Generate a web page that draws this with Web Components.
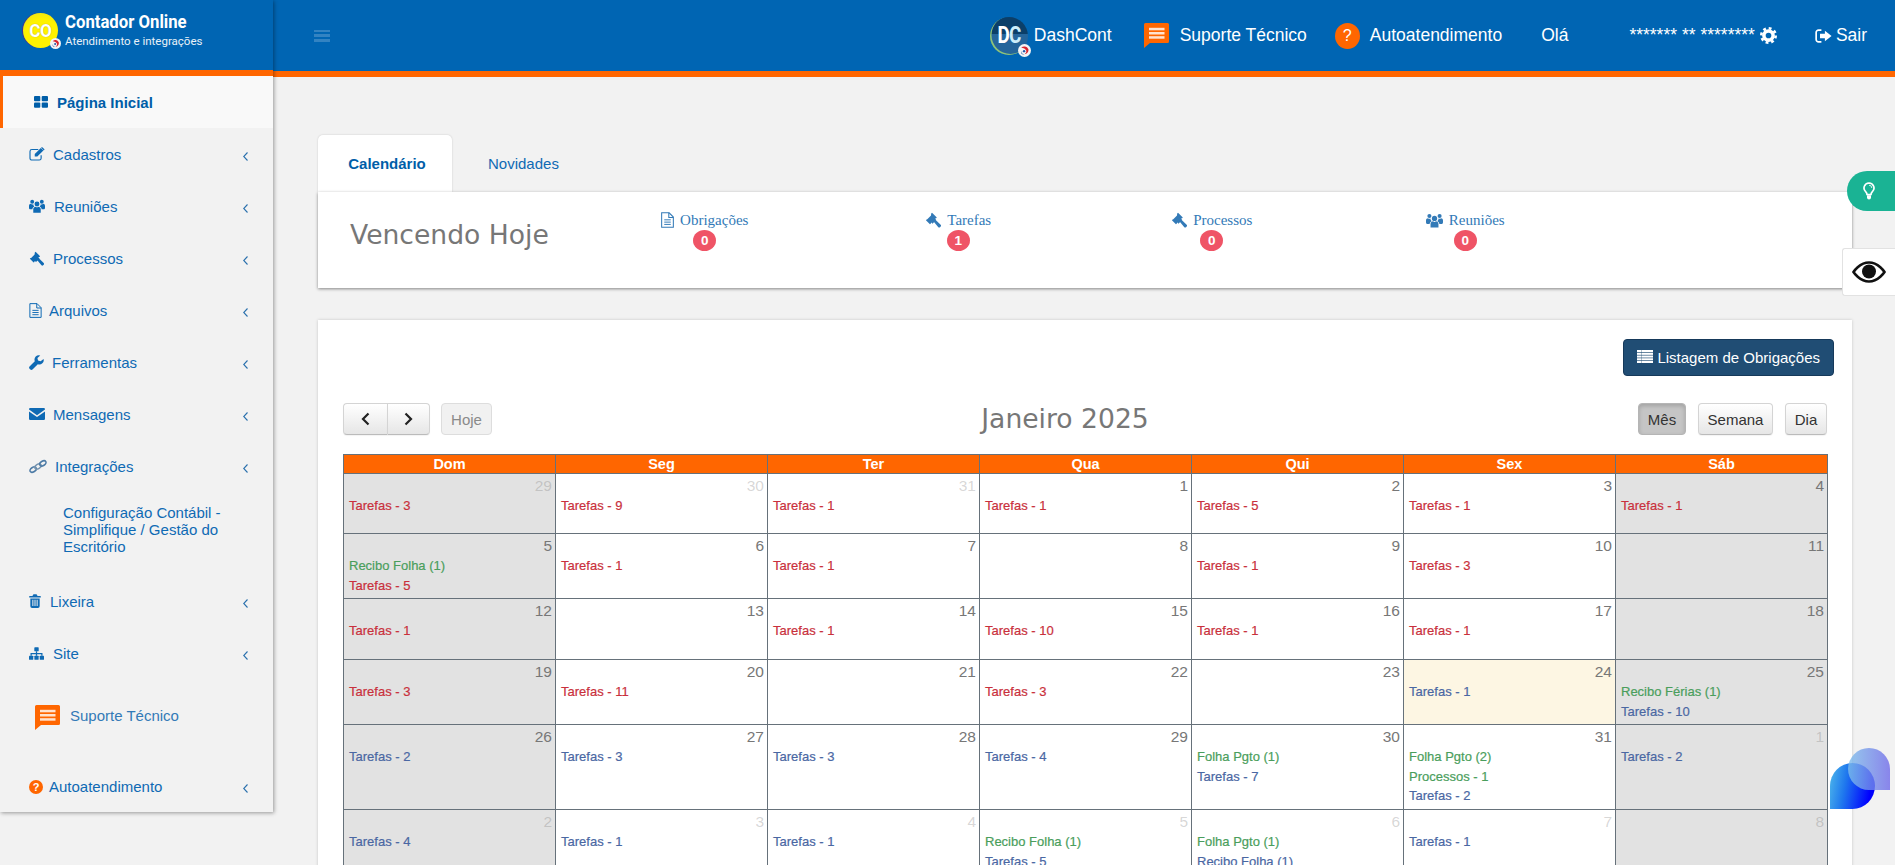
<!DOCTYPE html>
<html lang="pt-BR">
<head>
<meta charset="utf-8">
<title>Contador Online</title>
<style>
html,body{margin:0;padding:0;height:865px;overflow:hidden;background:#f2f2f2;font-family:"Liberation Sans",Arial,sans-serif;}
</style>
</head>
<body>
<cr-app>
  <cr-sidebar slot="sidebar"></cr-sidebar>
  <cr-topbar slot="top"></cr-topbar>
  <cr-tabs>
    <cr-due-card></cr-due-card>
  </cr-tabs>
  <cr-calendar></cr-calendar>
</cr-app>
<cr-floats></cr-floats>
<script>
const ICONS = {
  grid:'<svg viewBox="0 0 14 12"><rect x="0" y="0" width="6.3" height="5.2" rx="1"/><rect x="7.7" y="0" width="6.3" height="5.2" rx="1"/><rect x="0" y="6.6" width="6.3" height="5.2" rx="1"/><rect x="7.7" y="6.6" width="6.3" height="5.2" rx="1"/></svg>',
  edit:'<svg viewBox="0 0 24 22"><path d="M18.5 13v4.5a3 3 0 0 1-3 3H4a3 3 0 0 1-3-3V7a3 3 0 0 1 3-3h10" fill="none" stroke="currentColor" stroke-width="1.8"/><path d="M8.5 11 18 1.5l4 4L12.5 15h-4z"/><path d="M19 .6a1.2 1.2 0 0 1 1.7 0l2.6 2.6a1.2 1.2 0 0 1 0 1.7l-.6.6-4.3-4.3z"/></svg>',
  users:'<svg viewBox="0 0 24 20"><circle cx="12" cy="7" r="3.7"/><path d="M6.4 20v-5c0-2.6 1.8-4 3.6-4 .6.6 1.2 1 2 1s1.4-.4 2-1c1.8 0 3.6 1.400 3.600 4v5z"/><circle cx="4.800" cy="3.700" r="2.900"/><circle cx="19.200" cy="3.700" r="2.900"/><path d="M0 12.500V10c0-2 1.300-3.200 2.800-3.200.6.5 1.300.8 2 .8.500 0 1-.1 1.500-.4 0 1.400.6 2.800 1.700 3.700-1.500.6-2.800 2.100-2.900 4.100H2c-1.100 0-2-.9-2-2.500z"/><path d="M24 12.500V10c0-2-1.300-3.200-2.800-3.200-.6.5-1.300.8-2 .8-.5 0-1-.1-1.500-.4 0 1.400-.6 2.800-1.700 3.700 1.500.6 2.800 2.100 2.900 4.100H22c1.100 0 2-.9 2-2.500z"/></svg>',
  gavel:'<svg viewBox="0 0 24 24"><path d="M9.800 1.200 11 .2l1.200 1 6 6-1 1.200-1 .3-.6.600 1.700 1.700-5.600 5.600-1.700-1.700-.6.600-.3 1-1.200 1-6-6 1-1.200 1-.3 5.600-5.600z" transform="translate(-.5 1)"/><path d="M12.500 14 15.300 11.200 23.500 19.300a1.800 1.800 0 0 1 0 2.500l-1 1a1.800 1.800 0 0 1-2.500 0z"/></svg>',
  file:'<svg viewBox="0 0 20 24"><path d="M1 1h11.500L19 7.500V23H1z" fill="none" stroke="currentColor" stroke-width="1.600"/><path d="M12 1v7h7" fill="none" stroke="currentColor" stroke-width="1.600"/><rect x="5" y="11" width="10" height="1.500"/><rect x="5" y="14.500" width="10" height="1.500"/><rect x="5" y="18" width="10" height="1.500"/></svg>',
  wrench:'<svg viewBox="0 0 24 24"><path d="M23.300 6.200a7 7 0 0 1-9.200 8.500L6 22.800a3 3 0 0 1-4.300 0l-.5-.5a3 3 0 0 1 0-4.300l8.100-8.100A7 7 0 0 1 18 .7l-4.500 4 .9 4.200 4.200 1z"/></svg>',
  mail:'<svg viewBox="0 0 24 18"><path d="M0 1.800A1.800 1.800 0 0 1 1.800 0h20.400A1.800 1.800 0 0 1 24 1.800v.6L12 10.800 0 2.400z"/><path d="M0 5.200 12 13.600 24 5.200v11a1.800 1.800 0 0 1-1.800 1.800H1.800A1.800 1.800 0 0 1 0 16.200z"/></svg>',
  chain:'<svg viewBox="0 0 26 20" fill="none" stroke="#4d7ba6" stroke-width="2.200"><ellipse cx="6" cy="14.500" rx="5" ry="3.200" transform="rotate(-32 6 14.500)"/><ellipse cx="13" cy="10" rx="5" ry="3.200" transform="rotate(-32 13 10)" stroke="#7895b0"/><ellipse cx="20" cy="5.500" rx="5" ry="3.200" transform="rotate(-32 20 5.500)"/></svg>',
  trash:'<svg viewBox="0 0 20 24"><path fill-rule="evenodd" d="M6.500 1.500A1.500 1.500 0 0 1 8 .5h4a1.500 1.500 0 0 1 1.500 1l.8 2H19a1 1 0 0 1 1 1V6H0V4.500a1 1 0 0 1 1-1h4.700zM2 7.500h16V21a3 3 0 0 1-3 3H5a3 3 0 0 1-3-3zM5.500 10v10.500h1.700V10zm3.650 0v10.500h1.700V10zm3.650 0v10.500h1.700V10z"/></svg>',
  sitemap:'<svg viewBox="0 0 24 20"><rect x="8.500" y="0" width="7" height="6.500" rx="1"/><rect x="0" y="13.500" width="6.800" height="6.500" rx="1"/><rect x="8.600" y="13.500" width="6.800" height="6.500" rx="1"/><rect x="17.200" y="13.500" width="6.800" height="6.500" rx="1"/><path d="M11 6.500h2V9h8.600v4.500h-2V11H13v2.500h-2V11H4.400v2.500h-2V9H11z"/></svg>',
  chat:'<svg viewBox="0 0 25 25"><path fill="#ff6600" d="M1.500 0h22A1.500 1.500 0 0 1 25 1.500v17a1.500 1.500 0 0 1-1.500 1.500H6L0 25V1.500A1.500 1.500 0 0 1 1.500 0z"/><rect x="5" y="4.800" width="15.500" height="2.500" fill="#ffe3cf"/><rect x="5" y="9" width="15.500" height="2.500" fill="#ffe3cf"/><rect x="5" y="13.200" width="15.500" height="2.500" fill="#ffe3cf"/></svg>',
  gear:'<svg viewBox="0 0 24 24" fill="none" stroke="currentColor"><circle cx="12" cy="12" r="6.500" stroke-width="5"/><circle cx="12" cy="12" r="10.200" stroke-width="3.600" stroke-dasharray="4 4.010"/></svg>',
  signout:'<svg viewBox="0 0 24 20"><path d="M9 1.500H5A3.500 3.500 0 0 0 1.500 5v10A3.500 3.500 0 0 0 5 18.500h4" fill="none" stroke="currentColor" stroke-width="2.400"/><path d="M14 2.500 23.500 10 14 17.500v-4.300H7V6.800h7z"/></svg>',
  list:'<svg viewBox="0 0 16 13"><rect width="16" height="2.100" y="0"/><rect width="16" height="2.100" y="2.750"/><rect width="16" height="2.100" y="5.500"/><rect width="16" height="2.100" y="8.250"/><rect width="16" height="2.100" y="11"/><rect x="4" y="0" width=".7" height="13" fill="#204d74" opacity=".5"/></svg>',
  bulb:'<svg viewBox="0 0 12 18"><path d="M6 1a5 5 0 0 0-3.200 8.800C3.700 10.600 4 11.500 4 12.500h4c0-1 .3-1.900 1.200-2.700A5 5 0 0 0 6 1z" fill="none" stroke="currentColor" stroke-width="1.700"/><path d="M4 13.200h4v2.300a2 2 0 0 1-4 0z"/><path d="M6 3.200a2.800 2.800 0 0 1 2.800 2.800" fill="none" stroke="currentColor" stroke-width=".8"/></svg>',
  eye:'<svg viewBox="0 0 34 24"><path d="M1.500 12S7.500 2.500 17 2.500 32.500 12 32.500 12 26.500 21.500 17 21.500 1.500 12 1.500 12z" fill="none" stroke="currentColor" stroke-width="2.600"/><circle cx="17" cy="11.500" r="7"/></svg>',
  swirl:'<svg viewBox="0 0 12 12"><circle cx="6" cy="6" r="6" fill="#f4f4f4"/><path d="M3 3.500a4 4 0 0 1 6.500 1c.7 2.300-.8 4.800-3.500 5 1.400-1 2-2.200 1.600-3.500C7 4.600 5 3.500 3 3.500z" fill="#d9232e"/><path d="M3 6.500a3 3 0 0 0 3 3c-2.200.6-3.800-.8-3-3z" fill="#2456a6"/><circle cx="5.600" cy="6.600" r="1.100" fill="#2456a6"/></svg>'
};
function define(name, css, html, setup){
  customElements.define(name, class extends HTMLElement{
    connectedCallback(){
      if(this.shadowRoot) return;
      const r=this.attachShadow({mode:'open'});
      r.innerHTML='<style>'+css+'</style>'+(typeof html==='function'?html(this):html);
      if(setup) setup(this,r);
    }
  });
}
define('cr-icon',':host{display:inline-flex;flex:none;fill:currentColor}svg{display:block;width:100%;height:100%}',
  h=>ICONS[h.getAttribute('name')]||'',
  h=>{const w=h.getAttribute('w'),t=h.getAttribute('h');if(w)h.style.width=w+'px';if(t)h.style.height=t+'px';});

define('cr-app',`:host{display:flex;align-items:flex-start;width:1895px;height:865px;overflow:hidden;background:#f2f2f2}
.side{flex:none;width:273px;position:relative;z-index:2}
.col{flex:1;min-width:0}
.content{display:flex;flex-direction:column;padding:58px 43px 0 45px;gap:32px}`,
`<div class="side"><slot name="sidebar"></slot></div><div class="col"><slot name="top"></slot><div class="content"><slot></slot></div></div>`);

define('cr-brand',`:host{display:flex;align-items:flex-start;height:70px;box-sizing:border-box;background:#0065b3;border-bottom:0;color:#fff;padding:13px 0 0 23px;position:relative}
.logo{position:relative;width:35px;height:35px;border-radius:50%;background:radial-gradient(circle at 55% 65%,#fff200 0 55%,#e6de1c 100%);box-shadow:-1px 0 0 #4b2f8f;display:flex;align-items:center;justify-content:center}
.co{font:700 19px Roboto,sans-serif;color:#fff;letter-spacing:-.5px;transform:scaleX(.9);text-shadow:0 0 1px #a89c10}
cr-icon{position:absolute;right:-3px;bottom:-1px}
.t{margin-left:7px;display:flex;flex-direction:column;white-space:nowrap}
.a{font:700 19px/20px Roboto,sans-serif;transform:scaleX(.88);transform-origin:left;margin-top:-1px}
.b{font:400 11.500px/14px Roboto,sans-serif;margin-top:2px;color:#e8f1f8}`,
`<div class="logo"><span class="co">CO</span><cr-icon name="swirl" w="11" h="11"></cr-icon></div><div class="t"><span class="a">Contador Online</span><span class="b">Atendimento e integrações</span></div>`);

define('cr-nav-item',`:host{display:flex;align-items:center;height:52px;box-sizing:border-box;padding:0 25px 0 29px;color:#0f6ab4;font:15px "Liberation Sans",sans-serif}
:host([active]){background:#f9f9f9;border-left:3px solid #ff6600;padding-left:31px;color:#005ea8;font-weight:700}
.l{flex:1;white-space:nowrap}
.c{width:5px;height:9px;margin-top:4px;flex:none}`,
h=>{const n=h.getAttribute('icon'),w=h.getAttribute('w')||15,t=h.getAttribute('ih')||14,g=h.getAttribute('gap')||8;
  const ic=n==='q'?`<cr-q style="margin-right:${g}px"></cr-q>`:`<cr-icon name="${n}" w="${w}" h="${t}" style="margin-right:${g}px"></cr-icon>`;
  const ch=h.hasAttribute('nochev')?'':'<svg class="c" viewBox="0 0 5 9" fill="none" stroke="#2a70ad" stroke-width="1.100"><path d="M4.500 .5.700 4.500l3.800 4"/></svg>';
  return ic+`<span class="l"><slot></slot></span>`+ch;});
define('cr-q',`:host{display:inline-flex;flex:none;width:14px;height:14px;border-radius:50%;background:#ff6600;color:#fff;align-items:center;justify-content:center;font:700 11px/14px "Liberation Sans",sans-serif}`,'?');

define('cr-sidebar',`:host{display:block;width:273px;box-shadow:1px 1px 4px rgba(0,0,0,.38);background:#f2f2f2}
.bar{height:6px;background:#ff6600}
.sub{padding:11.500px 30px 20.500px 63px;font:15px/17px "Liberation Sans",sans-serif;color:#0f6ab4}
.sup{display:flex;align-items:center;height:72px;margin-bottom:10px;padding-left:35px;color:#337ab7;font:15px "Liberation Sans",sans-serif}
.sup cr-icon{margin:5px 10px 0 0}`,
`<cr-brand></cr-brand><div class="bar"></div>
<cr-nav-item icon="grid" w="14" ih="12" gap="9" nochev active>Página Inicial</cr-nav-item>
<cr-nav-item icon="edit" w="16" ih="14" gap="8">Cadastros</cr-nav-item>
<cr-nav-item icon="users" w="16" ih="14" gap="9">Reuniões</cr-nav-item>
<cr-nav-item icon="gavel" w="15" ih="15" gap="9">Processos</cr-nav-item>
<cr-nav-item icon="file" w="13" ih="15" gap="7">Arquivos</cr-nav-item>
<cr-nav-item icon="wrench" w="15" ih="15" gap="8">Ferramentas</cr-nav-item>
<cr-nav-item icon="mail" w="16" ih="12" gap="8">Mensagens</cr-nav-item>
<cr-nav-item icon="chain" w="18" ih="15" gap="8">Integrações</cr-nav-item>
<div class="sub">Configuração Contábil - Simplifique / Gestão do Escritório</div>
<cr-nav-item icon="trash" w="12" ih="14" gap="9">Lixeira</cr-nav-item>
<cr-nav-item icon="sitemap" w="15" ih="13" gap="9">Site</cr-nav-item>
<div class="sup"><cr-icon name="chat" w="25" h="25"></cr-icon><span>Suporte Técnico</span></div>
<cr-nav-item icon="q" gap="6" style="height:51px">Autoatendimento</cr-nav-item>`);

define('cr-topbar',`:host{display:flex;align-items:center;height:71px;box-sizing:content-box;background:#0065b3;border-bottom:6px solid #ff6600;color:#fff;font:17.500px "Liberation Sans",sans-serif;white-space:nowrap;padding:0 28px 0 0}
.row{display:flex;align-items:center;width:100%;height:64px}
.ham{margin:0 auto 0 41px;width:16px;height:12px;display:flex;flex-direction:column;justify-content:space-between}
.ham i{display:block;height:2.500px;background:rgba(255,255,255,.2)}
.dc{position:relative;width:38px;height:38px;border-radius:50%;background:linear-gradient(#0b3f69 0 45%,#25659b 45%);box-shadow:inset 1.500px -1px 0 #8cc37a;display:flex;align-items:center;justify-content:center;margin-right:6px}
.dc b{font:700 23px Roboto,sans-serif;transform:scaleX(.82);letter-spacing:-1px;color:#fff}
.dc b i{font-style:normal;color:#cdeefa}
.dc cr-icon{position:absolute;right:-3px;bottom:-2px}
.q{width:25px;height:26px;border-radius:50%;background:#ff6600;display:flex;align-items:center;justify-content:center;font-size:16px;margin:0 10px 0 28px}
.stars{margin-left:61px}.ola{margin-left:39px}
.gear{margin-left:5px;margin-top:0}
.out{margin:0 4px 0 38px}`,
`<div class="row"><div class="ham"><i></i><i></i><i></i></div>
<div class="dc"><b>D<i>C</i></b><cr-icon name="swirl" w="13" h="13"></cr-icon></div><span>DashCont</span>
<cr-icon name="chat" w="25" h="25" style="margin:0 11px 0 32px"></cr-icon><span>Suporte Técnico</span>
<div class="q">?</div><span>Autoatendimento</span>
<span class="ola">Olá</span><span class="stars">******* ** ********</span>
<cr-icon class="gear" name="gear" w="17" h="17"></cr-icon>
<cr-icon class="out" name="signout" w="17" h="14"></cr-icon><span>Sair</span></div>`);

define('cr-tabs',`:host{display:block;font:15px "Liberation Sans",sans-serif}
.tabs{display:flex;height:57px}
.t{display:flex;align-items:center;justify-content:center;box-sizing:border-box}
.a{width:134px;background:#fff;border-radius:5px 5px 0 0;font-weight:700;color:#005ea8;box-shadow:0 0 2px rgba(0,0,0,.18);padding-left:4px}
.b{padding-left:36px;color:#0f6ab4}`,
`<div class="tabs"><div class="t a">Calendário</div><div class="t b">Novidades</div></div><slot></slot>`);

define('cr-stat',`:host{display:block;text-align:center;color:#337ab7;font:15px/20px "Liberation Serif",serif;padding-top:18px}
.l{display:flex;justify-content:center;align-items:center}
cr-icon{margin-right:6px;color:#337ab7}
.n{display:inline-block;width:23px;height:21px;border-radius:50%;background:#ef5466;color:#fff;font:700 13.500px/21px "Liberation Sans",sans-serif;margin-top:-1px}`,
h=>`<div class="l"><cr-icon name="${h.getAttribute('icon')}" w="${h.getAttribute('w')}" h="${h.getAttribute('ih')}"></cr-icon><span><slot></slot></span></div><span class="n">${h.getAttribute('n')}</span>`);

define('cr-due-card',`:host{display:grid;grid-template-columns:260px repeat(4,253.500px);height:96px;background:#fff;box-shadow:0 1px 3px rgba(0,0,0,.45);position:relative}
h2{margin:23px 0 0 32px;font:400 26.600px/40px "DejaVu Sans",sans-serif;color:#777;white-space:nowrap}`,
`<h2>Vencendo Hoje</h2>
<cr-stat icon="file" w="13" ih="16" n="0">Obrigações</cr-stat>
<cr-stat icon="gavel" w="16" ih="16" n="1">Tarefas</cr-stat>
<cr-stat icon="gavel" w="16" ih="16" n="0">Processos</cr-stat>
<cr-stat icon="users" w="17" ih="15" n="0">Reuniões</cr-stat>`);

define('cr-btn',`:host{display:inline-flex;align-items:center;justify-content:center;height:32px;box-sizing:border-box;border:1px solid #d4d4d4;border-bottom-color:#bbb;border-radius:4px;background:linear-gradient(#fff,#e6e6e6);color:#333;font:15px "Liberation Sans",sans-serif;box-shadow:0 1px 1px rgba(0,0,0,.05)}
:host([on]){background:#c5c5c5;box-shadow:inset 0 2px 4px rgba(0,0,0,.18);border-color:#b5b5b5}
:host([off]){color:#8a8a8a;background:#f1f1f1;box-shadow:none;border-color:#ddd}`,'<slot></slot>');

const CAL=[
 [60,[[29,'o',['r:Tarefas - 3']],[30,'o',['r:Tarefas - 9']],[31,'o',['r:Tarefas - 1']],[1,'',['r:Tarefas - 1']],[2,'',['r:Tarefas - 5']],[3,'',['r:Tarefas - 1']],[4,'',['r:Tarefas - 1']]]],
 [65,[[5,'',['g:Recibo Folha (1)','r:Tarefas - 5']],[6,'',['r:Tarefas - 1']],[7,'',['r:Tarefas - 1']],[8,'',[]],[9,'',['r:Tarefas - 1']],[10,'',['r:Tarefas - 3']],[11,'',[]]]],
 [61,[[12,'',['r:Tarefas - 1']],[13,'',[]],[14,'',['r:Tarefas - 1']],[15,'',['r:Tarefas - 10']],[16,'',['r:Tarefas - 1']],[17,'',['r:Tarefas - 1']],[18,'',[]]]],
 [65,[[19,'',['r:Tarefas - 3']],[20,'',['r:Tarefas - 11']],[21,'',[]],[22,'',['r:Tarefas - 3']],[23,'',[]],[24,'t',['b:Tarefas - 1']],[25,'',['g:Recibo Férias (1)','b:Tarefas - 10']]]],
 [85,[[26,'',['b:Tarefas - 2']],[27,'',['b:Tarefas - 3']],[28,'',['b:Tarefas - 3']],[29,'',['b:Tarefas - 4']],[30,'',['g:Folha Pgto (1)','b:Tarefas - 7']],[31,'',['g:Folha Pgto (2)','g:Processos - 1','b:Tarefas - 2']],[1,'o',['b:Tarefas - 2']]]],
 [85,[[2,'o',['b:Tarefas - 4']],[3,'o',['b:Tarefas - 1']],[4,'o',['b:Tarefas - 1']],[5,'o',['g:Recibo Folha (1)','b:Tarefas - 5']],[6,'o',['g:Folha Pgto (1)','b:Recibo Folha (1)']],[7,'o',['b:Tarefas - 1']],[8,'o',[]]]]
];
define('cr-calendar',`:host{display:block;background:#fff;box-shadow:0 0 3px rgba(0,0,0,.18);padding:19px 25px 0;height:600px;font:15px "Liberation Sans",sans-serif}
.top{display:flex;justify-content:flex-end;margin:0 -7px 27px 0}
.lst{display:inline-flex;align-items:center;height:37px;padding:0 13px;background:#204d74;border:1px solid #16395a;border-radius:4px;color:#fff;box-sizing:border-box}
.lst cr-icon{margin-right:4px;margin-top:-2px}
.tb{display:flex;justify-content:space-between;align-items:center;height:32px;margin-bottom:19px}
.g{display:flex;align-items:center}
h2{margin:0;font:400 26.600px/32px "DejaVu Sans",sans-serif;color:#777;white-space:nowrap}
svg.ch{width:9px;height:14px}
table{width:1484px;border-collapse:collapse;table-layout:fixed}
th{height:18px;padding:0;background:#ff6600;color:#fff;font:700 14.500px/18px "Liberation Sans",sans-serif;border:1px solid #66717a}
td{padding:0;vertical-align:top;border:1px solid #66717a;background:#fff}
td.we{background:#e2e2e2}td.t{background:#fdf6e3}
.d{height:22px;text-align:right;padding-right:3px;font:15.500px/24px "Liberation Sans",sans-serif;color:#777}
td.o .d{color:rgba(119,119,119,.3)}
.e{font:13px/19.500px "Liberation Sans",sans-serif;padding-left:5px;white-space:nowrap;-webkit-text-stroke:.2px currentColor}
.r{color:#c9303c}.g2{color:#4a9e5c}.b{color:#4a67a3}`,
()=>{
 const cols=['Dom','Seg','Ter','Qua','Qui','Sex','Sáb'];
 const body=CAL.map(([h,cells])=>`<tr style="height:${h}px">`+cells.map(([n,k,ev],i)=>{
   const cls=[(i==0||i==6)?'we':'',k].join(' ');
   return `<td class="${cls}"><div class="d">${n}</div>`+ev.map(x=>{const [c,t]=x.split(':');return `<div class="e ${c=='g'?'g2':c}">${t}</div>`}).join('')+'</td>';
 }).join('')+'</tr>').join('');
 return `<div class="top"><span class="lst"><cr-icon name="list" w="16" h="13"></cr-icon>Listagem de Obrigações</span></div>
 <div class="tb"><div class="g"><cr-btn style="width:44px;border-radius:4px 0 0 4px;border-right:0"><svg class="ch" viewBox="0 0 9 14" fill="none" stroke="#222" stroke-width="2.200"><path d="M7.500 1.500 2 7l5.500 5.500"/></svg></cr-btn><cr-btn style="width:43px;border-radius:0 4px 4px 0"><svg class="ch" viewBox="0 0 9 14" fill="none" stroke="#222" stroke-width="2.200"><path d="M1.500 1.500 7 7l-5.500 5.500"/></svg></cr-btn><cr-btn off style="width:51px;margin-left:11px">Hoje</cr-btn></div>
 <h2>Janeiro 2025</h2>
 <div class="g" style="gap:12px"><cr-btn on style="width:48px">Mês</cr-btn><cr-btn style="width:75px">Semana</cr-btn><cr-btn style="width:42px">Dia</cr-btn></div></div>
 <table><colgroup>${'<col style="width:212px">'.repeat(7)}</colgroup><thead><tr>${cols.map(c=>`<th>${c}</th>`).join('')}</tr></thead><tbody>${body}</tbody></table>`;
});

define('cr-floats',`:host{display:block}
.tip{position:fixed;left:1847px;top:171px;width:48px;height:40px;background:#1ab394;border-radius:20px 0 0 20px;color:#fff;display:flex;align-items:center;padding-left:16px;box-sizing:border-box}
.eye{position:fixed;left:1842px;top:248px;width:53px;height:48px;background:#fff;border:1px solid #e2e2e2;border-right:0;border-radius:3px 0 0 3px;box-sizing:border-box;display:flex;align-items:center;justify-content:center;color:#111}
.s1{position:fixed;left:1830px;top:763px;width:45px;height:46px;border-radius:50% 50% 50% 0;background:linear-gradient(100deg,#4fb9ea 0,#1f78ee 35%,#0000ff 85%)}
.s2{position:fixed;left:1848px;top:748px;width:42px;height:42px;border-radius:50% 50% 0 50%;background:linear-gradient(90deg,rgba(125,190,235,.8),rgba(110,105,232,.8))}`,
`<div class="tip"><cr-icon name="bulb" w="12" h="18"></cr-icon></div><div class="eye"><cr-icon name="eye" w="34" h="24"></cr-icon></div><div class="s1"></div><div class="s2"></div>`);
</script>
</body>
</html>
